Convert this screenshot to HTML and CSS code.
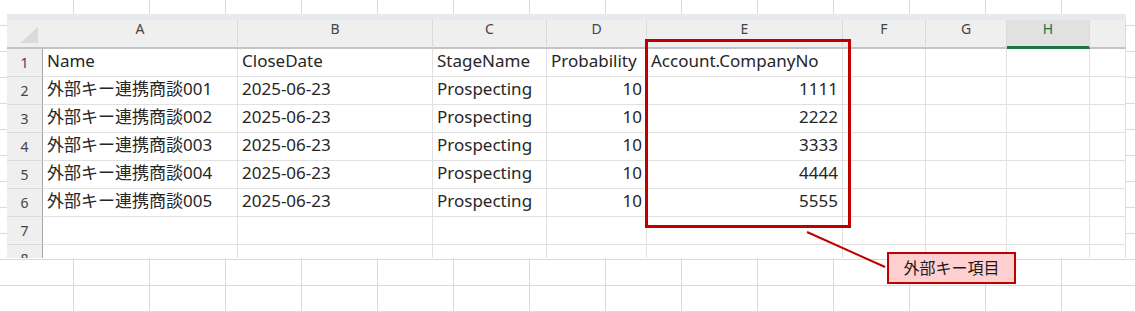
FILE: index.html
```html
<!DOCTYPE html>
<html lang="ja">
<head>
    <meta charset="UTF-8">
    <meta name="viewport" content="width=device-width, initial-scale=1.0">
    <title>外部キー項目</title>
    <link rel="stylesheet" href="styles.css">
</head>
<body>
    <div class="capture">
        <div class="sheet">
            <div class="band"></div>
            <div class="grid">
                <!-- column headers -->
                <div class="corner"></div>
                <div class="colhead">A</div>
                <div class="colhead">B</div>
                <div class="colhead">C</div>
                <div class="colhead">D</div>
                <div class="colhead">E</div>
                <div class="colhead">F</div>
                <div class="colhead">G</div>
                <div class="colhead selected">H</div>
                <div class="colhead"></div>

                <div class="rowhead">1</div>
                <div class="cell">Name</div>
                <div class="cell">CloseDate</div>
                <div class="cell">StageName</div>
                <div class="cell">Probability</div>
                <div class="cell">Account.CompanyNo</div>
                <div class="cell"></div>
                <div class="cell"></div>
                <div class="cell"></div>
                <div class="cell"></div>

                <div class="rowhead">2</div>
                <div class="cell">外部キー連携商談001</div>
                <div class="cell">2025-06-23</div>
                <div class="cell">Prospecting</div>
                <div class="cell num">10</div>
                <div class="cell num">1111</div>
                <div class="cell"></div>
                <div class="cell"></div>
                <div class="cell"></div>
                <div class="cell"></div>

                <div class="rowhead">3</div>
                <div class="cell">外部キー連携商談002</div>
                <div class="cell">2025-06-23</div>
                <div class="cell">Prospecting</div>
                <div class="cell num">10</div>
                <div class="cell num">2222</div>
                <div class="cell"></div>
                <div class="cell"></div>
                <div class="cell"></div>
                <div class="cell"></div>

                <div class="rowhead">4</div>
                <div class="cell">外部キー連携商談003</div>
                <div class="cell">2025-06-23</div>
                <div class="cell">Prospecting</div>
                <div class="cell num">10</div>
                <div class="cell num">3333</div>
                <div class="cell"></div>
                <div class="cell"></div>
                <div class="cell"></div>
                <div class="cell"></div>

                <div class="rowhead">5</div>
                <div class="cell">外部キー連携商談004</div>
                <div class="cell">2025-06-23</div>
                <div class="cell">Prospecting</div>
                <div class="cell num">10</div>
                <div class="cell num">4444</div>
                <div class="cell"></div>
                <div class="cell"></div>
                <div class="cell"></div>
                <div class="cell"></div>

                <div class="rowhead">6</div>
                <div class="cell">外部キー連携商談005</div>
                <div class="cell">2025-06-23</div>
                <div class="cell">Prospecting</div>
                <div class="cell num">10</div>
                <div class="cell num">5555</div>
                <div class="cell"></div>
                <div class="cell"></div>
                <div class="cell"></div>
                <div class="cell"></div>

                <div class="rowhead">7</div>
                <div class="cell"></div>
                <div class="cell"></div>
                <div class="cell"></div>
                <div class="cell"></div>
                <div class="cell"></div>
                <div class="cell"></div>
                <div class="cell"></div>
                <div class="cell"></div>
                <div class="cell"></div>

                <div class="rowhead">8</div>
                <div class="cell"></div>
                <div class="cell"></div>
                <div class="cell"></div>
                <div class="cell"></div>
                <div class="cell"></div>
                <div class="cell"></div>
                <div class="cell"></div>
                <div class="cell"></div>
                <div class="cell"></div>
            </div>
        </div>
        <!-- red frame round column E -->
        <div class="highlight"></div>
    </div>

    <svg class="leader" width="1135" height="312" viewBox="0 0 1135 312">
        <line x1="807" y1="232" x2="885" y2="267" stroke="#c00000" stroke-width="2"/>
    </svg>
    <div class="callout">外部キー項目</div>
</body>
</html>
```

FILE: styles.css
```css
html {
    margin: 0;
}
body {
    margin: 0;
    height: 312px;
    position: relative;
    overflow: hidden;
    font-family: "Noto Sans", "Noto Sans CJK JP", sans-serif;
    background-color: #fff;
    background-image:
        linear-gradient(to right, transparent 75px, #dadada 75px),
        linear-gradient(to bottom, transparent 25px, #dadada 25px);
    background-size: 76px 26px;
    background-position: -2px 0;
}

.capture {
    position: relative;
    width: 1119px;
    height: 244px;
    margin: 14px 0 0 7px;
}
.sheet {
    height: 244px;
    overflow: hidden;
    background-color: #fff;
}
.band {
    height: 6px;
    background-color: #e6e9ed;
}
.grid {
    display: grid;
    grid-template-columns: 36px 195px 195px 114px 100px 196px 83px 81px 83px 36px;
    grid-template-rows: 29px;
    grid-auto-rows: 28px;
}

.corner,
.colhead,
.rowhead,
.cell {
    box-sizing: border-box;
    white-space: nowrap;
}

.corner {
    position: relative;
    background-color: #efefef;
    border-bottom: 2px solid #c4c4c4;
}
.corner::after {
    content: "";
    position: absolute;
    left: 13px;
    top: 7px;
    width: 18px;
    height: 16px;
    background-color: #dadada;
    clip-path: polygon(100% 0, 100% 100%, 0 100%);
}

.colhead {
    background-color: #efefef;
    border-right: 1px solid #dadada;
    border-bottom: 2px solid #c4c4c4;
    text-align: center;
    font-size: 14px;
    line-height: 18px;
    color: #444;
}
.colhead.selected {
    background-color: #e1e1e1;
    color: #1e7145;
    border-bottom: 3px solid #1e7145;
}

.rowhead {
    background-color: #efefef;
    border-right: 1px solid #a6a6a6;
    border-bottom: 1px solid #dadada;
    text-align: center;
    font-size: 14px;
    line-height: 27px;
    color: #444;
}

.cell {
    border-right: 1px solid #e1e1e1;
    border-bottom: 1px solid #e1e1e1;
    padding: 0 4px;
    font-size: 17px;
    line-height: 23px;
    color: #262626;
}
.num {
    text-align: right;
}

.highlight {
    position: absolute;
    left: 638px;
    top: 25px;
    width: 206px;
    height: 189px;
    box-sizing: border-box;
    border: 3px solid #c00000;
}

.leader {
    position: absolute;
    left: 0;
    top: 0;
}
.callout {
    position: absolute;
    left: 887px;
    top: 252px;
    width: 129px;
    height: 32px;
    box-sizing: border-box;
    border: 2px solid #c00000;
    background-color: #ffd0d0;
    text-align: center;
    font-size: 16px;
    line-height: 28px;
    color: #1a1a1a;
}
```
